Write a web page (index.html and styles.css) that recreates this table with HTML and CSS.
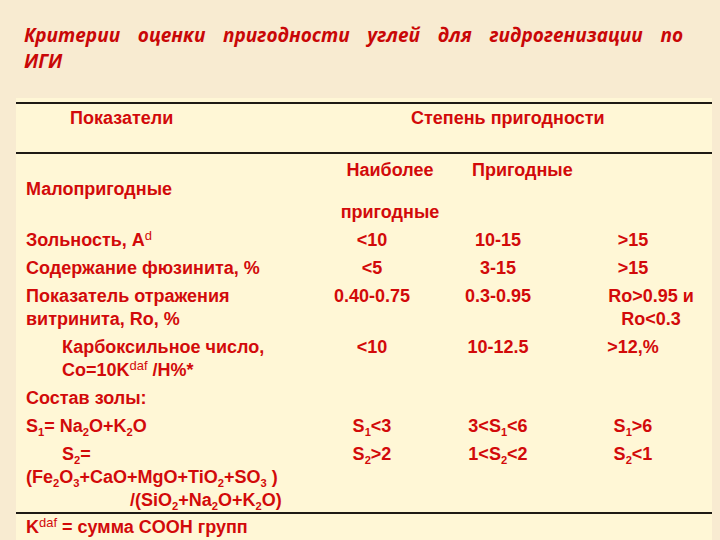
FILE: index.html
```html
<!DOCTYPE html>
<html lang="ru">
<head>
<meta charset="utf-8">
<title>Критерии оценки пригодности углей</title>
<link rel="stylesheet" href="styles.css">
</head>
<body>
<div class="title">
  <div class="t1">Критерии оценки пригодности углей для гидрогенизации по</div>
  <div class="t2">ИГИ</div>
</div>
<div class="sheet">
  <div class="head">
    <div class="h-left">Показатели</div>
    <div class="h-right">Степень пригодности</div>
  </div>
  <div class="grid sub-head">
    <div class="lab mal">Малопригодные</div>
    <div class="naib"><div>Наиболее</div><div class="second">пригодные</div></div>
    <div class="prig">Пригодные</div>
  </div>
  <div class="grid row">
    <div class="lab">Зольность, A<sup>d</sup></div>
    <div class="v">&lt;10</div><div class="v">10-15</div><div class="v">&gt;15</div>
  </div>
  <div class="grid row">
    <div class="lab">Содержание фюзинита, %</div>
    <div class="v">&lt;5</div><div class="v">3-15</div><div class="v">&gt;15</div>
  </div>
  <div class="grid row">
    <div class="lab">Показатель отражения<br>витринита, Ro, %</div>
    <div class="v">0.40-0.75</div><div class="v">0.3-0.95</div><div class="v ro">Ro&gt;0.95 и<br>Ro&lt;0.3</div>
  </div>
  <div class="grid row">
    <div class="lab ind">Карбоксильное число,<br>Co=10K<sup>daf</sup> /H%*</div>
    <div class="v">&lt;10</div><div class="v">10-12.5</div><div class="v">&gt;12,%</div>
  </div>
  <div class="grid row">
    <div class="lab">Состав золы:</div>
  </div>
  <div class="grid row">
    <div class="lab">S<sub>1</sub>= Na<sub>2</sub>O+K<sub>2</sub>O</div>
    <div class="v">S<sub>1</sub>&lt;3</div><div class="v">3&lt;S<sub>1</sub>&lt;6</div><div class="v">S<sub>1</sub>&gt;6</div>
  </div>
  <div class="grid row last">
    <div class="lab"><span class="ind-line">S<sub>2</sub>=</span><br>(Fe<sub>2</sub>O<sub>3</sub>+CaO+MgO+TiO<sub>2</sub>+SO<sub>3</sub> )<br><span class="div-line">/(SiO<sub>2</sub>+Na<sub>2</sub>O+K<sub>2</sub>O)</span></div>
    <div class="v">S<sub>2</sub>&gt;2</div><div class="v">1&lt;S<sub>2</sub>&lt;2</div><div class="v">S<sub>2</sub>&lt;1</div>
  </div>
  <div class="foot">K<sup>daf</sup> = сумма COOH групп</div>
</div>
</body>
</html>
```

FILE: styles.css
```css
html, body {
  margin: 0;
  padding: 0;
}
body {
  width: 720px;
  height: 540px;
  overflow: hidden;
  background: #f8ebd1;
  color: #d20a0a;
  font-family: "Liberation Sans", Arial, sans-serif;
  font-weight: bold;
  font-size: 18px;
}
.title {
  margin: 22px 0 0 24px;
  width: 659px;
  height: 76px;
  font-family: "Open Sans", "Noto Sans", sans-serif;
  font-style: italic;
  font-weight: bold;
  font-size: 19px;
  line-height: 26px;
  color: #c90707;
}
.t1 {
  text-align: justify;
  text-align-last: justify;
}
.sheet {
  margin: 0 0 0 16px;
  width: 696px;
  height: 442px;
  padding-top: 4px;
  background: #fff7d6;
}
.head {
  border-top: 2px solid #1e1a14;
  border-bottom: 2px solid #1e1a14;
  display: grid;
  grid-template-columns: 341px auto;
  padding: 3px 0 0 54px;
  box-sizing: border-box;
  height: 52px;
  line-height: 22px;
}
.grid {
  display: grid;
  grid-template-columns: 300px 92px 160px 110px;
  padding-left: 10px;
  line-height: 23px;
}
.sub-head {
  height: 75px;
  line-height: 22px;
}
.mal {
  padding-top: 24px;
}
.naib {
  padding-top: 5px;
  margin-right: -36px;
  text-align: center;
}
.naib .second {
  margin-top: 20px;
}
.prig {
  padding: 5px 0 0 54px;
}
.row {
  margin-bottom: 5px;
}
.row.last {
  margin-bottom: 0;
  border-bottom: 2px solid #1e1a14;
}
.v {
  text-align: center;
  white-space: nowrap;
}
.ro {
  margin-right: -36px;
}
.ind {
  padding-left: 36px;
}
.ind-line {
  padding-left: 36px;
}
.div-line {
  padding-left: 104px;
}
.foot {
  padding: 2px 0 0 10px;
  line-height: 23px;
}
sub {
  font-size: 0.62em;
  vertical-align: -0.4em;
  line-height: 0;
}
sup {
  font-size: 0.72em;
  font-weight: normal;
  vertical-align: 0.5em;
  line-height: 0;
}
```
